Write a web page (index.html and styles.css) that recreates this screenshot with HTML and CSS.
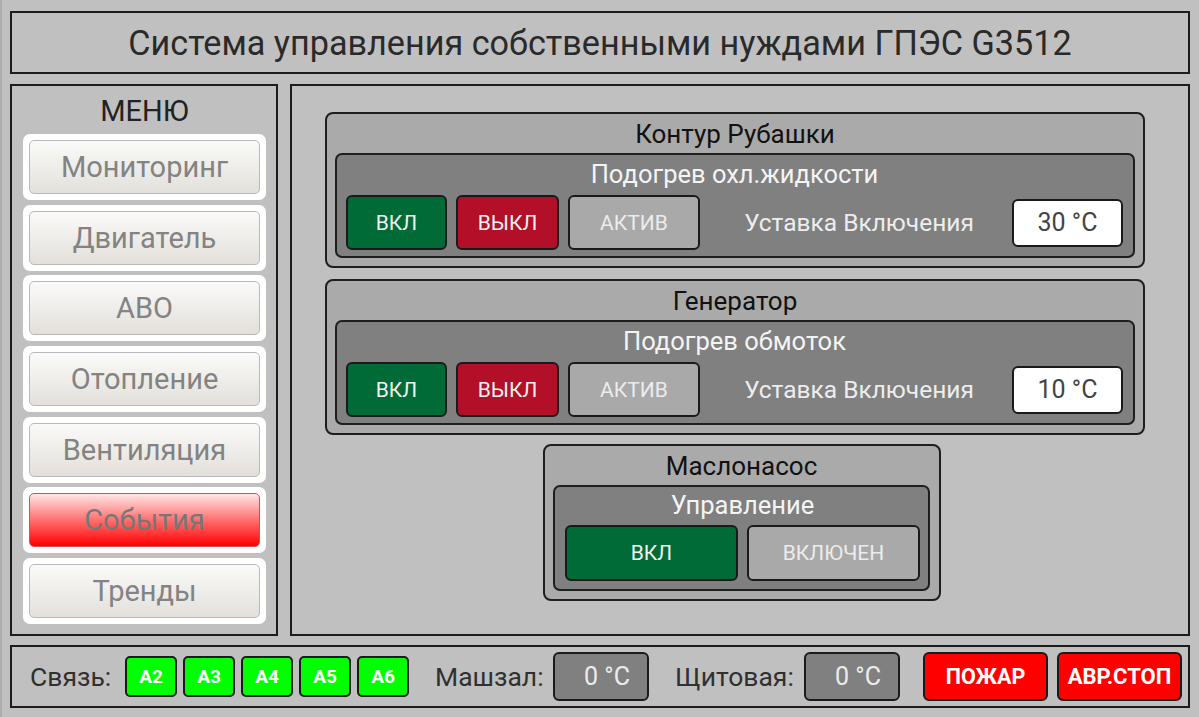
FILE: index.html
```html
<!DOCTYPE html>
<html lang="ru">
<head>
<meta charset="utf-8">
<title>Система управления собственными нуждами ГПЭС G3512</title>
<link rel="stylesheet" href="styles.css">
</head>
<body>
<div class="app">
  <header class="header"><h1 class="title">Система управления собственными нуждами ГПЭС G3512</h1></header>
  <div class="middle">
    <nav class="menu">
      <div class="menu-title">МЕНЮ</div>
      <div class="menu-list">
        <div class="menu-frame"><div class="menu-btn">Мониторинг</div></div>
        <div class="menu-frame"><div class="menu-btn">Двигатель</div></div>
        <div class="menu-frame"><div class="menu-btn">АВО</div></div>
        <div class="menu-frame"><div class="menu-btn">Отопление</div></div>
        <div class="menu-frame"><div class="menu-btn">Вентиляция</div></div>
        <div class="menu-frame"><div class="menu-btn menu-btn-alarm">События</div></div>
        <div class="menu-frame"><div class="menu-btn">Тренды</div></div>
      </div>
    </nav>
    <main class="main">
      <section class="group group-wide">
        <div class="group-title">Контур Рубашки</div>
        <div class="sub">
          <div class="sub-title">Подогрев охл.жидкости</div>
          <div class="row">
            <div class="btn btn-on w101">ВКЛ</div>
            <div class="btn btn-off w103">ВЫКЛ</div>
            <div class="btn btn-state w132">АКТИВ</div>
            <div class="setpoint-label">Уставка Включения</div>
            <div class="value-box">30 °C</div>
          </div>
        </div>
      </section>
      <section class="group group-wide group-second">
        <div class="group-title">Генератор</div>
        <div class="sub">
          <div class="sub-title">Подогрев обмоток</div>
          <div class="row">
            <div class="btn btn-on w101">ВКЛ</div>
            <div class="btn btn-off w103">ВЫКЛ</div>
            <div class="btn btn-state w132">АКТИВ</div>
            <div class="setpoint-label">Уставка Включения</div>
            <div class="value-box">10 °C</div>
          </div>
        </div>
      </section>
      <section class="group group-narrow">
        <div class="group-title">Маслонасос</div>
        <div class="sub sub-narrow">
          <div class="sub-title sub-title-narrow">Управление</div>
          <div class="row row-narrow">
            <div class="btn btn-on w173">ВКЛ</div>
            <div class="btn btn-state w173">ВКЛЮЧЕН</div>
          </div>
        </div>
      </section>
    </main>
  </div>
  <footer class="status">
    <span class="st-label st-svyaz">Связь:</span>
    <div class="links">
      <span class="link">A2</span>
      <span class="link">A3</span>
      <span class="link">A4</span>
      <span class="link">A5</span>
      <span class="link">A6</span>
    </div>
    <span class="st-label st-mash">Машзал:</span>
    <span class="temp">0 °C</span>
    <span class="st-label st-shit">Щитовая:</span>
    <span class="temp">0 °C</span>
    <span class="alarm alarm-fire">ПОЖАР</span>
    <span class="alarm alarm-stop">АВР.СТОП</span>
  </footer>
</div>
</body>
</html>
```
FILE: styles.css
```css
* { box-sizing: border-box; }
html, body { margin: 0; padding: 0; }
body {
  width: 1199px;
  height: 717px;
  background: #c0c0c0;
  font-family: Roboto, "Liberation Sans", sans-serif;
  overflow: hidden;
}
.app {
  display: flex;
  flex-direction: column;
  padding: 11px 9px 0 8px;
  height: 717px;
  border-left: 2px solid #adadad;
}

/* header */
.header {
  height: 63px;
  border: 2px solid #1c1c1c;
  display: flex;
  align-items: center;
  justify-content: center;
}
.title {
  margin: 0;
  font-weight: 400;
  font-size: 34.2px;
  color: #2a2a2a;
}

/* middle */
.middle {
  display: flex;
  gap: 12px;
  margin-top: 10px;
  height: 552px;
}
.menu {
  width: 268px;
  border: 2px solid #1c1c1c;
  padding: 0 10px 10px 11px;
  display: flex;
  flex-direction: column;
}
.menu-title {
  height: 48px;
  display: flex;
  align-items: center;
  justify-content: center;
  font-size: 29px;
  color: #222222;
  padding-top: 2px;
}
.menu-list {
  flex: 1;
  display: flex;
  flex-direction: column;
  justify-content: space-between;
}
.menu-frame {
  height: 66px;
  background: #ffffff;
  border-radius: 7px;
  padding: 6px;
}
.menu-btn {
  height: 100%;
  border: 1px solid #b9b9b9;
  border-radius: 5px;
  background: linear-gradient(#fafaf8, #e3e0db);
  display: flex;
  align-items: center;
  justify-content: center;
  font-size: 29px;
  color: #838383;
}
.menu-btn-alarm {
  background: linear-gradient(#ffe6e6 0%, #ff7070 50%, #ff0000 100%);
  color: #777777;
  border-color: #d05050;
}

/* main */
.main {
  flex: 1;
  border: 2px solid #1c1c1c;
  padding: 26px 0 0 33px;
  display: flex;
  flex-direction: column;
  align-items: flex-start;
}
.group {
  background: #aaaaaa;
  border: 2px solid #1e1e1e;
  border-radius: 8px;
  padding: 0 8px 8px 8px;
}
.group-wide { width: 820px; height: 156px; }
.group-second { margin-top: 11px; }
.group-narrow {
  width: 398px;
  height: 157px;
  margin-top: 9px;
  margin-left: 218px;
  padding-right: 9px;
}
.group-title {
  height: 39px;
  display: flex;
  align-items: center;
  justify-content: center;
  font-size: 26px;
  color: #111111;
  padding-top: 1px;
}
.sub {
  height: 105px;
  background: #808080;
  border: 2px solid #1e1e1e;
  border-radius: 7px;
  padding: 0 10px 6px 9px;
  display: flex;
  flex-direction: column;
}
.sub-narrow { height: 106px; padding: 0 8px 8px 10px; }
.sub-title {
  height: 40px;
  display: flex;
  align-items: center;
  justify-content: center;
  font-size: 25.5px;
  color: #f4f4f4;
  padding-bottom: 3px;
}
.sub-title-narrow { height: 38px; }
.row {
  flex: 1;
  display: flex;
  align-items: center;
}
.btn {
  height: 55px;
  border: 2px solid #1a1a1a;
  border-radius: 6px;
  display: flex;
  align-items: center;
  justify-content: center;
  font-size: 21px;
  color: #f2f2f2;
  margin-right: 9px;
}
.row-narrow .btn { height: 56px; }
.w101 { width: 101px; }
.w103 { width: 103px; }
.w132 { width: 132px; margin-right: 0; }
.w173 { width: 173px; }
.btn-on { background: #006b36; }
.btn-off { background: #b30f28; }
.btn-state { background: #a9a9a9; color: #ececec; }
.row-narrow .btn-state { margin-right: 0; }
.setpoint-label {
  flex: 1;
  text-align: center;
  font-size: 24.5px;
  color: #ededed;
  padding-left: 6px;
}
.value-box {
  width: 111px;
  height: 48px;
  background: #ffffff;
  border: 2px solid #1a1a1a;
  border-radius: 6px;
  display: flex;
  align-items: center;
  justify-content: center;
  font-size: 25px;
  color: #444444;
}

/* status bar */
.status {
  margin-top: 9px;
  height: 63px;
  border: 2px solid #1c1c1c;
  display: flex;
  align-items: center;
  padding-left: 18px;
}
.st-label {
  font-size: 26.5px;
  color: #303030;
}
.st-svyaz { width: 95px; }
.st-mash { width: 118px; margin-left: 26px; }
.st-shit { width: 129px; margin-left: 26px; }
.links { display: flex; gap: 6px; }
.link {
  width: 52px;
  height: 41px;
  background: #00ff00;
  border: 2px solid #1a1a1a;
  border-radius: 5px;
  display: flex;
  align-items: center;
  justify-content: center;
  font-size: 19px;
  font-weight: 700;
  color: #ffffff;
}
.temp {
  width: 96px;
  height: 49px;
  background: #808080;
  border: 2px solid #1a1a1a;
  border-radius: 6px;
  display: flex;
  align-items: center;
  justify-content: center;
  padding-left: 12px;
  font-size: 25px;
  color: #ececec;
}
.alarm {
  width: 125px;
  height: 49px;
  background: #ff0000;
  border: 2px solid #1a1a1a;
  border-radius: 6px;
  display: flex;
  align-items: center;
  justify-content: center;
  font-size: 21.5px;
  font-weight: 700;
  color: #ffffff;
}
.alarm-stop { font-size: 22px; }
.alarm-fire { margin-left: 23px; }
.alarm-stop { margin-left: 9px; }
```
